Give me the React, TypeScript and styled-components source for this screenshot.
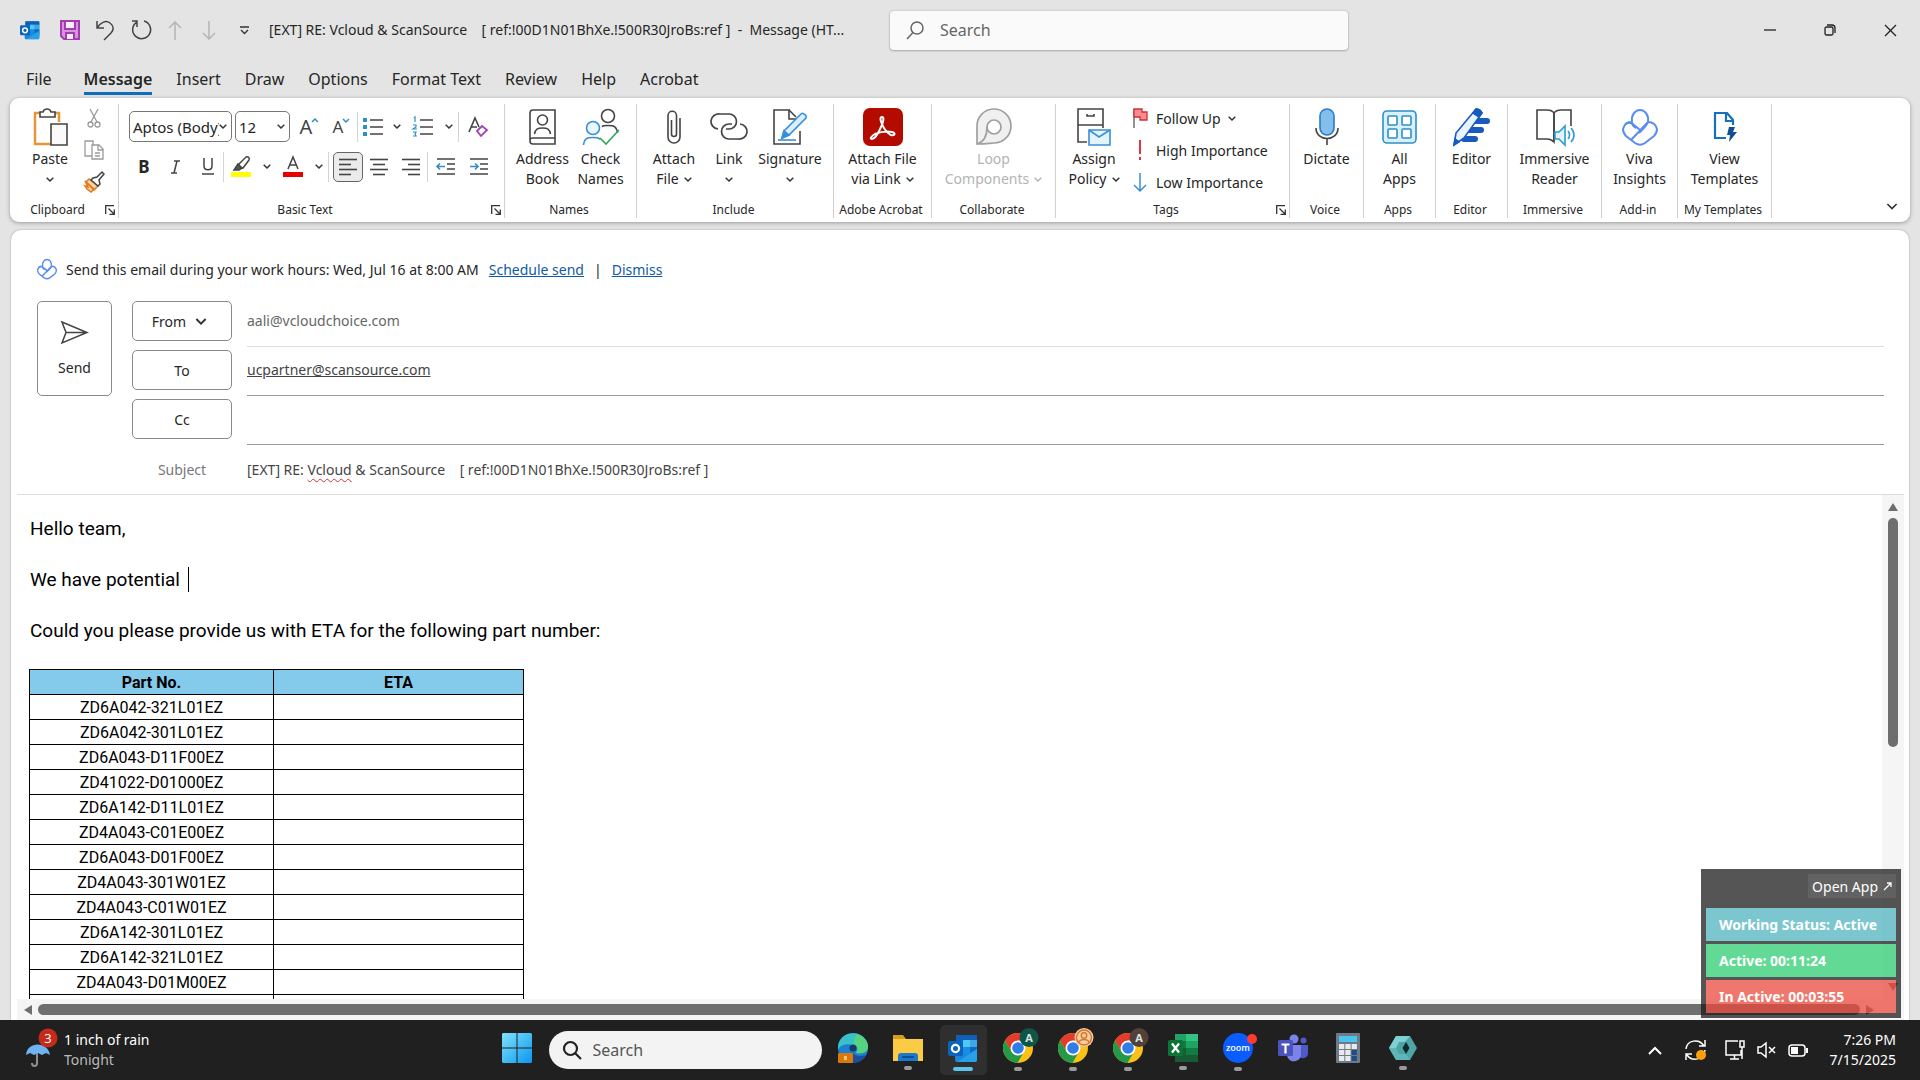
import React from "react";
import styled, { createGlobalStyle, css } from "styled-components";

const ui = `"Noto Sans", "Open Sans", sans-serif`;
const aptos = `Roboto, "Noto Sans", sans-serif`;

const Global = createGlobalStyle`
  * { box-sizing: border-box; }
  body { margin: 0; background: #e4e4e4; color: #262626; font-family: ${ui}; overflow: hidden; }
  button, input, select { font: inherit; color: inherit; background: none; border: 0; padding: 0; margin: 0; }
  svg { display: block; flex: none; overflow: visible; }
`;

const Shell = styled.div`
  display: flex;
  flex-direction: column;
  height: 100vh;
`;

/* ---------- Icon base ---------- */
type IconProps = { w: number; h: number; box?: string; children: React.ReactNode; color?: string; sw?: number };
const Icon = ({ w, h, box, children, color = "#444", sw = 1.5 }: IconProps) => (
  <svg width={w} height={h} viewBox={box ?? `0 0 ${w} ${h}`} fill="none" stroke={color} strokeWidth={sw} aria-hidden="true">
    {children}
  </svg>
);
const Chevron = ({ size = 8, color = "#333", sw = 1.5 }: { size?: number; color?: string; sw?: number }) => (
  <Icon w={size} h={size / 2 + 1} box="0 0 8 5" color={color} sw={sw}>
    <path d="M.7.7 4 4 7.3.7" />
  </Icon>
);

/* ---------- Title bar ---------- */
const TitleBar = styled.header`
  display: grid;
  grid-template-columns: minmax(0, 860px) 458px 1fr;
  column-gap: 30px;
  align-items: center;
  height: 60px;
`;
const QuickAccess = styled.div`
  display: flex;
  align-items: center;
  padding-left: 18px;
`;
const QuickButton = styled.button<{ $w: number }>`
  display: flex;
  justify-content: center;
  align-items: center;
  width: ${(p) => p.$w}px;
  height: 32px;
`;
const WindowTitle = styled.div`
  margin-left: 17px;
  font-size: 14px;
  line-height: 20px;
  white-space: pre;
`;
const TitleSearch = styled.label`
  display: flex;
  align-items: center;
  gap: 16px;
  height: 39px;
  padding-left: 16px;
  border-radius: 4px;
  background: #fafafa;
  box-shadow: 0 0 2px #aaa, 0 1px 2px #aaa;
  input { flex: 1; min-width: 0; font-size: 16px; outline: 0; }
  input::placeholder { color: #666; opacity: 1; }
`;
const WindowButtons = styled.div`
  display: flex;
  justify-content: flex-end;
`;

/* ---------- Tabs ---------- */
const Tabs = styled.nav`
  display: flex;
  gap: 24px;
  height: 38px;
  padding: 7px 26px 0;
`;
const Tab = styled.button<{ $active?: boolean; $after?: number }>`
  height: 28px;
  margin-right: ${(p) => p.$after ?? 0}px;
  font-size: 16px;
  line-height: 25px;
  font-weight: ${(p) => (p.$active ? 600 : 400)};
  border-bottom: 3px solid ${(p) => (p.$active ? "#0f6cbd" : "transparent")};
`;

/* ---------- Ribbon ---------- */
const Ribbon = styled.section`
  display: flex;
  align-items: flex-start;
  height: 124px;
  margin: 0 10px;
  padding-top: 6px;
  border-radius: 9px;
  background: #fff;
  box-shadow: 0 1px 4px #999;
`;
const Group = styled.div<{ $w: number }>`
  display: flex;
  flex-direction: column;
  width: ${(p) => p.$w}px;
  height: 114px;
  border-right: 1px solid #d0d0d0;
`;
const GroupBody = styled.div`
  display: flex;
  justify-content: center;
  flex: 1;
`;
const TagsBody = styled.div`
  display: flex;
  flex: 1;
  gap: 2px;
  padding-left: 3px;
`;
const GroupFoot = styled.div`
  display: flex;
  align-items: center;
  height: 16px;
  padding-right: 3px;
  span { flex: 1; font-size: 12px; line-height: 16px; text-align: center; white-space: nowrap; }
`;
const Big = styled.button<{ $w: number }>`
  display: flex;
  flex-direction: column;
  align-items: center;
  justify-content: flex-start;
  width: ${(p) => p.$w}px;
  font-size: 14px;
  line-height: 20px;
  white-space: nowrap;
  &:disabled { color: #b4b4b4; }
`;
const BigIcon = styled.span`
  display: flex;
  align-items: center;
  justify-content: center;
  height: 45px;
`;
const Line = styled.span`
  display: flex;
  align-items: center;
  justify-content: center;
  gap: 5px;
  height: 20px;
`;
const Stack = styled.div`
  display: flex;
  flex-direction: column;
  gap: 4px;
`;
const Small = styled.button`
  display: flex;
  align-items: center;
  justify-content: center;
  width: 28px;
  height: 28px;
`;
const TagButton = styled.button`
  display: flex;
  align-items: center;
  gap: 7px;
  height: 28px;
  font-size: 14px;
  white-space: nowrap;
  > span { display: flex; justify-content: center; width: 18px; }
`;
const Tools = styled.div`
  display: flex;
  flex-direction: column;
  gap: 9px;
  flex: 1;
  padding: 7px 0 0 10px;
`;
const ToolRow = styled.div`
  display: flex;
  align-items: center;
  height: 31px;
`;
const Tool = styled.button<{ $w: number; $on?: boolean }>`
  display: flex;
  align-items: center;
  justify-content: center;
  width: ${(p) => p.$w}px;
  height: 30px;
  font-size: 17px;
  ${(p) =>
    p.$on &&
    css`
      border: 1px solid #666;
      border-radius: 5px;
      background: #ebebeb;
      margin-left: 4px;
    `}
`;
const Rule = styled.i`
  width: 1px;
  height: 30px;
  background: #d4d4d4;
`;
const Picker = styled.label<{ $w: number }>`
  display: flex;
  align-items: center;
  width: ${(p) => p.$w}px;
  height: 31px;
  margin-right: 3px;
  padding: 0 4px 0 3px;
  border: 1px solid #777;
  border-radius: 5px;
  select { flex: 1; min-width: 0; appearance: none; font-size: 15px; outline: 0; overflow: hidden; }
`;
const Glyph = styled.span<{ $size: number }>`
  font-size: ${(p) => p.$size}px;
  line-height: 24px;
  color: #444;
`;
const Collapse = styled.button`
  align-self: flex-end;
  margin: 0 12px 12px auto;
`;

/* ---------- Message pane ---------- */
const Pane = styled.main`
  display: flex;
  flex-direction: column;
  flex: 1;
  min-height: 0;
  margin: 8px 11px 0;
  padding: 27px 5px 0 6px;
  border-radius: 10px 10px 0 0;
  background: #fff;
  box-shadow: 0 0 2px #999;
`;
const Notice = styled.div`
  display: flex;
  align-items: center;
  gap: 10px;
  height: 24px;
  padding-left: 20px;
  font-size: 14px;
  svg { margin-right: -1px; }
  a { color: #0f5ba8; text-decoration: underline; }
`;
const Headers = styled.div`
  display: grid;
  grid-template-columns: 80px 100px 1fr;
  grid-auto-rows: 49px;
  column-gap: 15px;
  align-items: start;
  margin-top: 17px;
  padding: 0 20px;
  border-bottom: 1px solid #dcdcdc;
  font-size: 14px;
`;
const SendButton = styled.button`
  grid-row: 1 / 4;
  display: flex;
  flex-direction: column;
  align-items: center;
  justify-content: center;
  gap: 14px;
  width: 75px;
  height: 95px;
  margin-top: 3px;
  border: 1px solid #8a8a8a;
  border-radius: 5px;
`;
const FieldButton = styled.button`
  display: flex;
  align-items: center;
  justify-content: center;
  gap: 9px;
  height: 40px;
  margin-top: 3px;
  border: 1px solid #8a8a8a;
  border-radius: 5px;
  svg { margin-right: 5px; }
`;
const Field = styled.input<{ $light?: boolean; $link?: boolean }>`
  align-self: stretch;
  width: 100%;
  padding-bottom: 3px;
  color: ${(p) => (p.$light ? "#666" : "#444")};
  border-bottom: 1px solid ${(p) => (p.$light ? "#ddd" : "#999")};
  text-decoration: ${(p) => (p.$link ? "underline" : "none")};
  outline: 0;
`;
const SubjectLabel = styled.span`
  grid-column: 2;
  line-height: 49px;
  text-align: center;
  color: #777;
`;
const Subject = styled.div`
  line-height: 49px;
  white-space: pre;
  color: #444;
  u { text-decoration: underline wavy #d13438 1px; text-underline-offset: 3px; text-decoration-skip-ink: none; }
`;

/* ---------- Body ---------- */
const Editor = styled.div`
  display: grid;
  grid-template-columns: minmax(0, 1fr) 22px;
  grid-template-rows: minmax(0, 1fr) 21px;
  flex: 1;
  min-height: 0;
`;
const Letter = styled.article`
  overflow: hidden;
  padding: 21px 12px 0;
  font-family: ${aptos};
  color: #000;
  p { margin: 0 0 25px 1px; font-size: 19px; line-height: 26px; }
`;
const Caret = styled.i`
  display: inline-block;
  width: 1px;
  height: 25px;
  margin-left: 3px;
  vertical-align: -6px;
  background: #000;
`;
const Parts = styled.table`
  border-collapse: collapse;
  table-layout: fixed;
  width: 495px;
  font-size: 16px;
  line-height: 23px;
  text-align: center;
  th, td { height: 25px; padding: 1px 0 0; border: 1px solid #000; }
  th { background: #83caeb; }
  th:first-child { width: 244px; }
`;
const VTrack = styled.div`
  display: flex;
  flex-direction: column;
  align-items: center;
  gap: 7px;
  padding: 8px 0;
  background: #f5f5f5;
  svg:last-child { margin-top: auto; }
`;
const HTrack = styled.div`
  display: flex;
  align-items: center;
  gap: 6px;
  grid-column: 1 / 3;
  padding: 0 30px 0 7px;
  background: #f5f5f5;
`;
const VThumb = styled.i`
  width: 10px;
  height: 47%;
  border-radius: 5px;
  background: #6e6e6e;
`;
const HThumb = styled.i`
  flex: 1;
  height: 11px;
  border-radius: 6px;
  background: #6e6e6e;
`;

/* ---------- Floating status widget ---------- */
const Widget = styled.aside`
  position: fixed;
  right: 19px;
  bottom: 62px;
  display: flex;
  flex-direction: column;
  gap: 3px;
  width: 200px;
  padding: 5px;
  background: #1c1c1c;
  opacity: 0.75;
  color: #fff;
`;
const OpenApp = styled.button`
  align-self: flex-end;
  display: flex;
  align-items: center;
  gap: 6px;
  height: 24px;
  margin-bottom: 7px;
  padding: 0 4px;
  background: #2e2e2e;
  font-size: 14px;
`;
const Bar = styled.div<{ $bg: string }>`
  height: 33px;
  padding-left: 13px;
  background: ${(p) => p.$bg};
  font-size: 14px;
  font-weight: 700;
  line-height: 34px;
`;

/* ---------- Taskbar ---------- */
const Taskbar = styled.footer`
  display: grid;
  grid-template-columns: 1fr auto 1fr;
  height: 60px;
  background: #202020;
  color: #fff;
  font-size: 14px;
  line-height: 20px;
`;
const Weather = styled.button`
  display: flex;
  align-items: center;
  justify-self: start;
  gap: 6px;
  padding-left: 24px;
  text-align: left;
  small { display: block; font-size: 14px; color: #bbb; }
`;
const Apps = styled.div`
  display: flex;
  align-items: center;
`;
const TaskButton = styled.button<{ $active?: boolean; $dot?: boolean }>`
  display: flex;
  flex-direction: column;
  align-items: center;
  justify-content: center;
  width: 47px;
  height: 50px;
  margin: 0 4px;
  padding-top: 4px;
  border-radius: 5px;
  background: ${(p) => (p.$active ? "#2f2f2f" : "transparent")};
  &::after {
    content: "";
    width: ${(p) => (p.$active ? 20 : 8)}px;
    height: 4px;
    margin-top: 4px;
    border-radius: 2px;
    background: ${(p) => (p.$active ? "#5cc3ee" : p.$dot ? "#9a9a9a" : "transparent")};
  }
`;
const TaskSearch = styled.label`
  display: flex;
  align-items: center;
  gap: 12px;
  width: 273px;
  height: 38px;
  margin: 0 4px;
  padding-left: 14px;
  border-radius: 19px;
  background: #f3f3f3;
  input { flex: 1; min-width: 0; font-size: 16px; outline: 0; }
  input::placeholder { color: #555; opacity: 1; }
`;
const Tray = styled.div`
  display: flex;
  align-items: center;
  justify-content: flex-end;
  gap: 12px;
  padding-right: 24px;
`;
const TrayButton = styled.button<{ $gap?: number }>`
  margin-right: ${(p) => p.$gap ?? 0}px;
`;
const Clock = styled.time`
  margin-left: 10px;
  text-align: right;
`;

/* ---------- Drawings ---------- */
const OutlookIcon = ({ size }: { size: number }) => (
  <svg width={size} height={size} viewBox="0 0 30 30" aria-hidden="true">
    <rect x="8" y="2" width="21" height="24" rx="2" fill="#1490df" />
    <rect x="8" y="2" width="21" height="6" fill="#0f5fb8" />
    <rect x="15" y="7" width="7" height="7" fill="#50c8f4" />
    <rect x="22" y="7" width="7" height="7" fill="#3ba8ea" />
    <rect x="22" y="14" width="7" height="7" fill="#1267c4" />
    <path d="M7 17l11 5 11-6v11a2 2 0 0 1-2 2H9a2 2 0 0 1-2-2z" fill="#1a86db" />
    <path d="M29 16v11a2 2 0 0 1-2 2H9z" fill="#2fb2f0" opacity=".6" />
    <rect x="0" y="8" width="15" height="15" rx="2" fill="#0a64bd" />
    <circle cx="7.500" cy="15.500" r="3.600" fill="none" stroke="#fff" strokeWidth="2.200" />
  </svg>
);
const Person = ({ x, y, r, color, fill = "none" }: { x: number; y: number; r: number; color: string; fill?: string }) => (
  <g stroke={color} fill={fill}>
    <circle cx={x} cy={y} r={r} />
    <path d={`M${x - r - 3} ${y + r * 2 + 4}c1-${r} 3-${r + 1} ${r + 3}-${r + 1}s${r + 2} 1 ${r + 3} ${r + 1}`} fill="none" />
  </g>
);
const VivaIcon = ({ w, h, sw = 2 }: { w: number; h: number; sw?: number }) => (
  <Icon w={w} h={h} box="0 0 36 36" color="#5b8def" sw={sw}>
    <path d="M10 13c-1-7 3-12 8-12s9 5 8 12c-1 3-3 5-5 7l-4 4" />
    <path d="M10 13c-5 0-8 3-9 7 0 3 1 5 3 7l9 7c3 2 7 2 10 0l9-7c2-2 3-4 3-7-1-4-4-7-9-7" />
    <path d="M3 15c3-2 6-2 9 1l6 5M26 13 9 31" />
    <path d="M10 13c0 3 2 5 4 6" />
  </Icon>
);
const Chrome = ({ badge, letter }: { badge: string; letter?: string }) => (
  <svg width="30" height="30" viewBox="0 0 30 30" aria-hidden="true">
    <circle cx="15" cy="15" r="15" fill="#fbc116" />
    <path d="M2 7.500A15 15 0 0 1 28 7.500H15L8.500 18.700z" fill="#e33b2e" />
    <path d="M2 7.500 8.500 18.700a7.500 7.500 0 0 0 12.500 0L14.500 30A15 15 0 0 1 2 7.500z" fill="#229a48" />
    <circle cx="15" cy="15" r="7.500" fill="#fff" />
    <circle cx="15" cy="15" r="5.800" fill="#2f7de9" />
    <circle cx="26" cy="4.500" r="9.500" fill={badge} />
    {letter ? (
      <text x="26" y="8.500" fill="#d8e6e0" fontSize="11" fontWeight="700" textAnchor="middle" fontFamily="Open Sans">{letter}</text>
    ) : (
      <g fill="none" stroke="#d9782d" strokeWidth="1.500">
        <circle cx="26" cy="4.500" r="7.500" />
        <circle cx="26" cy="2.500" r="2.700" />
        <path d="M21 9.500c1-4 9-4 10 0" />
      </g>
    )}
  </svg>
);
const Launcher = () => (
  <Icon w={10} h={10} sw={1.3} color="#333">
    <path d="M.7 9V.7H9M3.500 3.500 9 9M9.300 4.500v4.800H4.500" />
  </Icon>
);
const Lines = ({ rows }: { rows: [number, number][] }) => (
  <Icon w={18} h={18} sw={1.6}>
    {rows.map(([a, b], i) => (
      <path key={i} d={`M${a} ${1.5 + i * 5}H${b}`} />
    ))}
  </Icon>
);

const CaretLine = ({ text, color }: { text?: string; color?: string }) => (
  <Line>
    {text}
    <Chevron color={color} />
  </Line>
);

const icons = {
  address: (
    <Icon w={27} h={36} sw={1.6}>
      <path d="M4 1h22v34H4a3 3 0 0 1-3-3V4a3 3 0 0 1 3-3zM1 32c0-3 1-3 3-3h22" />
      <Person x={13.5} y={11} r={5} color="#444" />
    </Icon>
  ),
  check: (
    <Icon w={36} h={37} sw={1.6}>
      <Person x={25} y={8} r={6.5} color="#444" />
      <circle cx="10" cy="20" r="9" fill="#fff" stroke="none" />
      <Person x={10} y={20} r={6.5} color="#3a8fd6" fill="#eaf6ff" />
      <path d="M17 29h12l3 8H17z" fill="#fff" stroke="none" />
      <path d="M17 30l6 6L36 22" stroke="#37a357" />
    </Icon>
  ),
  attach: (
    <Icon w={14} h={36} sw={1.6}>
      <path d="M4.500 11v14a2.500 2.500 0 0 0 5 0V6.500a4 4 0 0 0-8.500 0V28a6 6 0 0 0 12 0V9" />
    </Icon>
  ),
  link: (
    <Icon w={36} h={28} sw={1.7}>
      <path d="M7 16a8 7.500 0 0 1 2-15h9a7.500 7.500 0 0 1 0 15h-3" />
      <path d="M29 11a8 7.500 0 0 1-2 15h-9a7.500 7.500 0 0 1 0-15h3" />
    </Icon>
  ),
  signature: (
    <Icon w={36} h={36} sw={1.6}>
      <path d="M18 1H2v34h26V22M17 1v9h7" />
      <path d="M17 1l7 7" />
      <path d="M32 5a3 3 0 0 1 2 4L17 26l-7 3 2-7L29 5c1-1 2-1 3 0z" fill="#d9efff" stroke="#3a8fd6" />
      <path d="M10 29l2-7 5 4z" fill="#3a8fd6" stroke="#3a8fd6" />
      <path d="M6 31h18" stroke="#3a8fd6" />
    </Icon>
  ),
  adobe: (
    <Icon w={40} h={38} sw={2} color="#fff">
      <rect width="40" height="38" rx="7" fill="#b30b00" stroke="none" />
      <path d="M19 9c-2 0-2 3 0 7 2 5 5 9 9 11 4 1 5-2 1-3-5-1-12 0-17 2-5 3-5 5-3 5 3 0 6-5 9-12 3-6 3-10 1-10z" />
    </Icon>
  ),
  loop: (
    <Icon w={36} h={36} color="#a0a0a0" sw={1.7}>
      <path d="M1 35V18A17 17 0 1 1 18 34c-3 0-8 1-17 1z" fill="#f0f0f0" />
      <circle cx="18" cy="18" r="7" fill="#fff" />
      <path d="M11 18c0 8-3 15-10 17" />
    </Icon>
  ),
  assign: (
    <Icon w={34} h={38} sw={1.6}>
      <path d="M10 34H1V1h25v19M1 17h25M10 6v2h7V6" />
      <path d="M12 22h21v15H12z" fill="#e3f4ff" stroke="#3a8fd6" />
      <path d="M12 22l10 7 11-7" stroke="#3a8fd6" />
    </Icon>
  ),
  mic: (
    <Icon w={24} h={37} sw={1.6}>
      <rect x="5" y="1" width="14" height="26" rx="7" fill="#83beec" stroke="#2b7cc4" />
      <path d="M1 20c0 14 22 14 22 0M12 31v6" />
    </Icon>
  ),
  apps: (
    <Icon w={35} h={34} color="#2f8fc6" sw={1.6}>
      <rect x="1" y="1" width="33" height="32" rx="4" fill="#d8f1fd" />
      {[[6, 6], [20, 6], [6, 19], [20, 19]].map(([x, y]) => (
        <rect key={`${x}-${y}`} x={x} y={y} width="9" height="9" rx="1" fill="#fff" />
      ))}
    </Icon>
  ),
  editor: (
    <Icon w={38} h={38} color="#185abd" sw={1.6}>
      <path d="M20 13h14M16 22h12M11 31h11" strokeWidth="6" strokeLinecap="round" />
      <path d="M23 1c3 0 5 2 6 4L11 30 1 37l2-12z" fill="#e9f2ff" />
      <path d="M23 1c3 0 5 2 6 4l-3 4-6-4zM1 37l1-6 4 3z" fill="#185abd" />
    </Icon>
  ),
  reader: (
    <Icon w={38} h={36} sw={1.6}>
      <path d="M18 4C16 1 13 1 11 1H1v29h10c3 0 5 1 7 3V4c2-3 5-3 7-3h10v16" />
      <path d="M18 4v28" />
      <path d="M19 23h4l6-6v19l-6-6h-4z" fill="#e3f4ff" stroke="#2f9bd0" />
      <path d="M32 22c2 2 2 6 0 8M35 19c4 4 4 10 0 14" stroke="#2f9bd0" />
    </Icon>
  ),
  view: (
    <Icon w={24} h={32} color="#1671b8" sw={2.2}>
      <path d="M13 27H2V2h12l6 7v5M13 2v8h7" />
      <path d="M16 16h6l-2 5h4l-8 10 1-7h-3z" fill="#0f4f92" stroke="none" />
    </Icon>
  ),
};

type BigSpec = { w: number; icon: keyof typeof icons | "viva"; a: string; b?: string; caret?: boolean; off?: boolean };
const BigButton = ({ w, icon, a, b, caret, off }: BigSpec) => (
  <Big $w={w} disabled={off}>
    <BigIcon>{icon === "viva" ? <VivaIcon w={36} h={36} /> : icons[icon]}</BigIcon>
    <Line>{a}</Line>
    {caret ? <CaretLine text={b} color={off ? "#b4b4b4" : undefined} /> : b && <Line>{b}</Line>}
  </Big>
);

const groupsLeft: { w: number; name: string; items: BigSpec[] }[] = [
  { w: 132, name: "Names", items: [{ w: 60, icon: "address", a: "Address", b: "Book" }, { w: 56, icon: "check", a: "Check", b: "Names" }] },
  {
    w: 197,
    name: "Include",
    items: [
      { w: 60, icon: "attach", a: "Attach", b: "File", caret: true },
      { w: 50, icon: "link", a: "Link", caret: true },
      { w: 72, icon: "signature", a: "Signature", caret: true },
    ],
  },
  { w: 98, name: "Adobe Acrobat", items: [{ w: 90, icon: "adobe", a: "Attach File", b: "via Link", caret: true }] },
  { w: 124, name: "Collaborate", items: [{ w: 110, icon: "loop", a: "Loop", b: "Components", caret: true, off: true }] },
];
const groupsRight: typeof groupsLeft = [
  { w: 74, name: "Voice", items: [{ w: 66, icon: "mic", a: "Dictate" }] },
  { w: 72, name: "Apps", items: [{ w: 66, icon: "apps", a: "All", b: "Apps" }] },
  { w: 72, name: "Editor", items: [{ w: 66, icon: "editor", a: "Editor" }] },
  { w: 94, name: "Immersive", items: [{ w: 84, icon: "reader", a: "Immersive", b: "Reader" }] },
  { w: 76, name: "Add-in", items: [{ w: 66, icon: "viva", a: "Viva", b: "Insights" }] },
  { w: 94, name: "My Templates", items: [{ w: 84, icon: "view", a: "View", b: "Templates" }] },
];
const BigGroups = ({ list }: { list: typeof groupsLeft }) => (
  <>
    {list.map((g) => (
      <Group key={g.name} $w={g.w}>
        <GroupBody>
          {g.items.map((i) => (
            <BigButton key={i.a} {...i} />
          ))}
        </GroupBody>
        <GroupFoot>
          <span>{g.name}</span>
        </GroupFoot>
      </Group>
    ))}
  </>
);
const Foot = ({ name }: { name: string }) => (
  <GroupFoot>
    <span>{name}</span>
    <button aria-label={`${name} options`}>
      <Launcher />
    </button>
  </GroupFoot>
);
const Drop = ({ label }: { label: string }) => (
  <Tool $w={18} aria-label={label}>
    <Chevron />
  </Tool>
);

const parts = [
  "ZD6A042-321L01EZ", "ZD6A042-301L01EZ", "ZD6A043-D11F00EZ", "ZD41022-D01000EZ", "ZD6A142-D11L01EZ",
  "ZD4A043-C01E00EZ", "ZD6A043-D01F00EZ", "ZD4A043-301W01EZ", "ZD4A043-C01W01EZ", "ZD6A142-301L01EZ",
  "ZD6A142-321L01EZ", "ZD4A043-D01M00EZ", "",
];

export default function App() {
  return (
    <Shell>
      <Global />
      <TitleBar>
        <QuickAccess>
          <QuickButton $w={24} aria-label="Outlook"><OutlookIcon size={20} /></QuickButton>
          <QuickButton $w={56} aria-label="Save">
            <Icon w={20} h={20} color="#a23db0" sw={2}>
              <path d="M1 1h18v18H4l-3-3z" fill="#d991e0" />
              <path d="M5 1h10v8H5zM6 19v-6h8v6" fill="#f7ecf8" />
            </Icon>
          </QuickButton>
          <QuickButton $w={14} aria-label="Undo">
            <Icon w={18} h={20}><path d="M1 1v7h7M1 8C5 2 10 0 14 3s4 7 1 10l-7 7" /></Icon>
          </QuickButton>
          <QuickButton $w={56} aria-label="Redo">
            <Icon w={21} h={20}><path d="M2 1h5v6M14 1a9 9 0 1 1-7 1" /></Icon>
          </QuickButton>
          <QuickButton $w={14} aria-label="Previous item">
            <Icon w={14} h={19} color="#b4b4b4"><path d="M7 19V1M1 7l6-6 6 6" /></Icon>
          </QuickButton>
          <QuickButton $w={54} aria-label="Next item">
            <Icon w={14} h={19} color="#b4b4b4"><path d="M7 0v18M1 12l6 6 6-6" /></Icon>
          </QuickButton>
          <QuickButton $w={16} aria-label="Customize toolbar">
            <Icon w={9} h={9} sw={1.3} color="#333"><path d="M0 1h9M1 4l3.500 3.500L8 4" /></Icon>
          </QuickButton>
          <WindowTitle>{"[EXT] RE: Vcloud & ScanSource    [ ref:!00D1N01BhXe.!500R30JroBs:ref ]  -  Message (HT..."}</WindowTitle>
        </QuickAccess>
        <TitleSearch>
          <Icon w={18} h={18} color="#666"><circle cx="11" cy="7" r="6" /><path d="M7 11.500 1 18" /></Icon>
          <input placeholder="Search" aria-label="Search" />
        </TitleSearch>
        <WindowButtons>
          <QuickButton $w={60} aria-label="Minimize"><Icon w={12} h={12} color="#222" sw={1.3}><path d="M0 6h12" /></Icon></QuickButton>
          <QuickButton $w={60} aria-label="Restore">
            <Icon w={12} h={12} color="#222" sw={1.3}><rect x="1" y="3" width="8" height="8" rx="1.500" /><path d="M3 1h5a3 3 0 0 1 3 3v5" /></Icon>
          </QuickButton>
          <QuickButton $w={60} aria-label="Close"><Icon w={13} h={13} color="#222" sw={1.3}><path d="M1 1l11 11M12 1 1 12" /></Icon></QuickButton>
        </WindowButtons>
      </TitleBar>

      <Tabs>
        <Tab $after={8}>File</Tab>
        <Tab $active>Message</Tab>
        {["Insert", "Draw", "Options", "Format Text", "Review", "Help", "Acrobat"].map((t) => (
          <Tab key={t}>{t}</Tab>
        ))}
      </Tabs>

      <Ribbon>
        <Group $w={109}>
          <GroupBody>
            <Big $w={60}>
              <BigIcon>
                <Icon w={35} h={38} sw={1.6}>
                  <path d="M8 5H2v31h16M20 5h6v9" stroke="#e8943a" strokeWidth="2.500" />
                  <path d="M7 9V4h3c1-4 7-4 8 0h4v5z" fill="#fff" />
                  <path d="M18 16h16v21H18z" fill="#fafafa" />
                </Icon>
              </BigIcon>
              <Line>Paste</Line>
              <CaretLine />
            </Big>
            <Stack>
              <Small aria-label="Cut">
                <Icon w={14} h={20} color="#9a9a9a" sw={1.3}><path d="M3 1l7 13M11 1 4 14" /><circle cx="3.500" cy="16.500" r="2.500" /><circle cx="10.500" cy="16.500" r="2.500" /></Icon>
              </Small>
              <Small aria-label="Copy">
                <Icon w={20} h={20} color="#9a9a9a" sw={1.3}><path d="M8 16H1V1h8v4M8 5h7l4 4v10H8zM14 5v5h5M11 13h5M11 16h5" /></Icon>
              </Small>
              <Small aria-label="Format painter">
                <Icon w={20} h={20}><path d="M1 9l9 8-3 3-4-3-2-3 3 1zM5 7l9 7-4 4-8-8z" fill="#fbd3a4" stroke="#e07a1c" /><path d="M9 6l4-1 5-5 2 2-5 6 1 4-2 2-7-6z" fill="#fff" /></Icon>
              </Small>
            </Stack>
          </GroupBody>
          <Foot name="Clipboard" />
        </Group>

        <Group $w={386}>
          <Tools>
            <ToolRow>
              <Picker $w={103}>
                <select aria-label="Font"><option>Aptos (Body)</option></select>
                <Chevron />
              </Picker>
              <Picker $w={55}>
                <select aria-label="Font size"><option>12</option></select>
                <Chevron />
              </Picker>
              <Tool $w={32} aria-label="Grow font">
                <Glyph $size={20}>A</Glyph>
                <Icon w={6} h={18} color="#2f8fc6"><path d="M0 4l3-3 3 3" /></Icon>
              </Tool>
              <Tool $w={32} aria-label="Shrink font">
                <Glyph $size={17}>A</Glyph>
                <Icon w={6} h={18} color="#2f8fc6"><path d="M0 1l3 3 3-3" /></Icon>
              </Tool>
              <Rule />
              <Tool $w={30} aria-label="Bullets">
                <Icon w={20} h={20} sw={1.6}>
                  <path d="M7 3h13M7 10h13M7 17h13" />
                  <path d="M0 3h4M0 10h4M0 17h4" stroke="#2f8fc6" strokeWidth="4" />
                </Icon>
              </Tool>
              <Drop label="Bullet styles" />
              <Tool $w={34} aria-label="Numbering">
                <Icon w={20} h={20} sw={1.6}>
                  <path d="M7 3h13M7 10h13M7 17h13" />
                  <path d="M1 1l1-1v5M0 8h3v2L0 12h4M0 15h3l-1 2 1 2H0" stroke="#2f8fc6" strokeWidth="1.200" />
                </Icon>
              </Tool>
              <Drop label="Number styles" />
              <Rule />
              <Tool $w={38} aria-label="Clear formatting">
                <Icon w={20} h={20} sw={1.6}>
                  <path d="M1 15 7 1l4 9M3 10h6" />
                  <path d="M9 14l5-5 5 4-6 6z" fill="#fff" stroke="#9b45b2" strokeWidth="1.800" />
                </Icon>
              </Tool>
            </ToolRow>
            <ToolRow>
              <Tool $w={30}><b>B</b></Tool>
              <Tool $w={34} aria-label="Italic"><Icon w={10} h={14}><path d="M3 1h6M0 13h6M6 1 3 13" /></Icon></Tool>
              <Tool $w={30} aria-label="Underline"><Icon w={12} h={17}><path d="M2 0v8c0 5 8 5 8 0V0M0 16h12" /></Icon></Tool>
              <Rule />
              <Tool $w={34} aria-label="Highlight">
                <Icon w={20} h={21}>
                  <path d="M0 16h20v5H0z" fill="#ff0" stroke="none" />
                  <path d="M8 8l7-7c2-1 4 1 3 3l-6 8-4 1-1-1z" />
                  <path d="M7 8l4 4-3 2H3z" fill="#555" />
                </Icon>
              </Tool>
              <Drop label="Highlight colors" />
              <Tool $w={34} aria-label="Font color">
                <Icon w={20} h={21}>
                  <path d="M0 16h20v5H0z" fill="#e60000" stroke="none" />
                  <path d="M5 13 10 1l5 12M7 9h6" />
                </Icon>
              </Tool>
              <Drop label="Font colors" />
              <Rule />
              <Tool $w={30} $on aria-label="Align left"><Lines rows={[[0, 18], [0, 12], [0, 18], [0, 12]]} /></Tool>
              <Tool $w={32} aria-label="Center"><Lines rows={[[0, 18], [3, 15], [0, 18], [3, 15]]} /></Tool>
              <Tool $w={32} aria-label="Align right"><Lines rows={[[0, 18], [6, 18], [0, 18], [6, 18]]} /></Tool>
              <Rule />
              <Tool $w={36} aria-label="Decrease indent">
                <Icon w={18} h={17} sw={1.6}><path d="M0 1h18M10 6h8M10 11h8M0 16h18" /><path d="M8 8.500H0M3 5.500l-3 3 3 3" stroke="#2f8fc6" /></Icon>
              </Tool>
              <Tool $w={30} aria-label="Increase indent">
                <Icon w={18} h={17} sw={1.6}><path d="M0 1h18M10 6h8M10 11h8M0 16h18" /><path d="M0 8.500h8M5 5.500l3 3-3 3" stroke="#2f8fc6" /></Icon>
              </Tool>
            </ToolRow>
          </Tools>
          <Foot name="Basic Text" />
        </Group>

        <BigGroups list={groupsLeft} />

        <Group $w={234}>
          <TagsBody>
            <BigButton w={70} icon="assign" a="Assign" b="Policy" caret />
            <Stack>
              <TagButton>
                <span><Icon w={14} h={20} color="#c9333d" sw={1.3}><path d="M1 1v19" stroke="#555" /><path d="M1 1h8v3h5v8H7V9H1z" fill="#fb8a8f" /></Icon></span>
                Follow Up <Chevron />
              </TagButton>
              <TagButton>
                <span><Icon w={4} h={20} color="#e0343f" sw={2}><path d="M2 0v14M2 17v3" /></Icon></span>
                High Importance
              </TagButton>
              <TagButton>
                <span><Icon w={14} h={19} color="#3a8fd6"><path d="M7 0v18M1 12l6 6 6-6" /></Icon></span>
                Low Importance
              </TagButton>
            </Stack>
          </TagsBody>
          <Foot name="Tags" />
        </Group>

        <BigGroups list={groupsRight} />
        <Collapse aria-label="Collapse ribbon"><Chevron size={12} sw={1.2} /></Collapse>
      </Ribbon>

      <Pane>
        <Notice>
          <VivaIcon w={20} h={20} sw={2.6} />
          <span>Send this email during your work hours: Wed, Jul 16 at 8:00 AM</span>
          <a href="#schedule">Schedule send</a>
          <span>|</span>
          <a href="#dismiss">Dismiss</a>
        </Notice>
        <Headers>
          <SendButton>
            <Icon w={27} h={23}><path d="M1 1l25 10.500L1 22l4-10.500zM5 11.500h21" /></Icon>
            Send
          </SendButton>
          <FieldButton>From <Chevron size={12} sw={1.4} /></FieldButton>
          <Field $light aria-label="From" defaultValue="aali@vcloudchoice.com" />
          <FieldButton>To</FieldButton>
          <Field $link aria-label="To" defaultValue="ucpartner@scansource.com" />
          <FieldButton>Cc</FieldButton>
          <Field aria-label="Cc" />
          <SubjectLabel id="subject">Subject</SubjectLabel>
          <Subject role="textbox" aria-labelledby="subject">
            [EXT] RE: <u>Vcloud</u>{" & ScanSource    [ ref:!00D1N01BhXe.!500R30JroBs:ref ]"}
          </Subject>
        </Headers>
        <Editor>
          <Letter>
            <p>Hello team,</p>
            <p>We have potential <Caret /></p>
            <p>Could you please provide us with ETA for the following part number:</p>
            <Parts>
              <thead><tr><th>Part No.</th><th>ETA</th></tr></thead>
              <tbody>
                {parts.map((p, i) => (
                  <tr key={i}><td>{p}</td><td /></tr>
                ))}
              </tbody>
            </Parts>
          </Letter>
          <VTrack>
            <Icon w={10} h={8}><path d="M5 0l5 8H0z" fill="#6e6e6e" stroke="none" /></Icon>
            <VThumb />
            <Icon w={10} h={8}><path d="M5 8l5-8H0z" fill="#6e6e6e" stroke="none" /></Icon>
          </VTrack>
          <HTrack>
            <Icon w={8} h={10}><path d="M0 5l8-5v10z" fill="#6e6e6e" stroke="none" /></Icon>
            <HThumb />
            <Icon w={8} h={10}><path d="M8 5 0 0v10z" fill="#6e6e6e" stroke="none" /></Icon>
          </HTrack>
        </Editor>
      </Pane>

      <Widget>
        <OpenApp>Open App <Icon w={8} h={8} color="#fff" sw={1.3}><path d="M0 8l7-7M3 1h4v4" /></Icon></OpenApp>
        <Bar $bg="#50b3bf">Working Status: Active</Bar>
        <Bar $bg="#2ecc71">Active: 00:11:24</Bar>
        <Bar $bg="#eb4a3c">In Active: 00:03:55</Bar>
      </Widget>

      <Taskbar>
        <Weather>
          <svg width="34" height="42" viewBox="0 0 34 42" aria-hidden="true">
            <path d="M2 26c1-14 22-14 24 0l-4-2-4 2-4-2-4 2-4-2z" fill="#6fb4f2" />
            <path d="M13 24v10c0 4-5 4-5 0" fill="none" stroke="#8f8f8f" strokeWidth="2" />
            <circle cx="24" cy="9" r="9.500" fill="#c42b1c" />
            <text x="24" y="14" fontSize="13" fill="#fff" textAnchor="middle" fontFamily="Open Sans">3</text>
          </svg>
          <span>1 inch of rain<small>Tonight</small></span>
        </Weather>
        <Apps>
          <TaskButton aria-label="Start">
            <svg width="30" height="30" viewBox="0 0 30 30" aria-hidden="true">
              <defs><linearGradient id="win" x1="0" y1="0" x2="1" y2="1" gradientUnits="objectBoundingBox"><stop stopColor="#7fe3fb" /><stop offset="1" stopColor="#0b96f0" /></linearGradient></defs>
              <path d="M1 0h13.500v14.500H0V1zM15.500 0H29l1 1v13.500H15.500zM0 15.500h14.500V30H1l-1-1zM15.500 15.500H30V29l-1 1H15.500z" fill="url(#win)" />
            </svg>
          </TaskButton>
          <TaskSearch>
            <Icon w={18} h={19} color="#222" sw={2.2}><circle cx="7.500" cy="7.500" r="6.500" /><path d="M12 12l6 6" /></Icon>
            <input placeholder="Search" aria-label="Search Windows" />
          </TaskSearch>
          <TaskButton aria-label="Edge">
            <svg width="30" height="30" viewBox="0 0 30 30" aria-hidden="true">
              <circle cx="15" cy="15" r="15" fill="#1c7fd1" />
              <path d="M0 13C2-3 27-5 30 13c0 7-6 8-12 7 3-4 1-8-3-8C8 10 2 12 0 17z" fill="#38c1c9" />
              <path d="M18 1c8 2 12 7 12 12 0 7-6 8-12 7 3-4 1-8-3-8z" fill="#5fd66f" opacity=".8" />
              <circle cx="15" cy="15" r="3.500" fill="#143a66" />
              <path d="M14 19c2 4 8 5 14 3-3 6-8 8-13 8z" fill="#1a4f9c" />
              <rect x="0" y="20" width="15" height="10" rx="1" fill="#d9790b" />
              <rect x="6" y="23" width="3" height="4" fill="#ffc46b" />
            </svg>
          </TaskButton>
          <TaskButton $dot aria-label="File Explorer">
            <svg width="30" height="28" viewBox="0 0 30 28" aria-hidden="true">
              <path d="M0 1h10l3 4v6H0z" fill="#d99b1a" />
              <path d="M0 5h30v22H0z" fill="#fbcb45" />
              <path d="M5 27v-5c0-2 1-3 3-3h14c2 0 3 1 3 3v5z" fill="#1a78cf" />
              <path d="M9 22h12v2H9z" fill="#0d4f96" />
            </svg>
          </TaskButton>
          <TaskButton $active aria-label="Outlook"><OutlookIcon size={30} /></TaskButton>
          <TaskButton $dot aria-label="Chrome, A"><Chrome badge="#0f5648" letter="A" /></TaskButton>
          <TaskButton $dot aria-label="Chrome, guest"><Chrome badge="#f3cfa4" /></TaskButton>
          <TaskButton $dot aria-label="Chrome, second A"><Chrome badge="#54403b" letter="A" /></TaskButton>
          <TaskButton $dot aria-label="Excel">
            <svg width="30" height="28" viewBox="0 0 30 28" aria-hidden="true">
              <path d="M7 0h23v28H7z" fill="#21a366" />
              <path d="M18 0h12v7H18z" fill="#33c481" />
              <path d="M7 14h11v7H7zM7 21h23v7H7z" fill="#185c37" />
              <path d="M18 14h12v7H18zM7 7h11v7H7z" fill="#107c41" />
              <rect y="6" width="15" height="16" rx="1.500" fill="#0f7238" />
              <path d="M4 9.500l7 9M11 9.500l-7 9" stroke="#fff" strokeWidth="2.200" />
            </svg>
          </TaskButton>
          <TaskButton $dot aria-label="Zoom">
            <svg width="30" height="30" viewBox="0 0 30 30" aria-hidden="true">
              <circle cx="15" cy="15" r="15" fill="#0b5cff" />
              <text x="15" y="18" fontSize="9" fontWeight="600" fill="#fff" textAnchor="middle" fontFamily="Open Sans">zoom</text>
              <circle cx="29" cy="6" r="5" fill="#ff3b30" />
            </svg>
          </TaskButton>
          <TaskButton aria-label="Teams">
            <svg width="30" height="28" viewBox="0 0 30 28" aria-hidden="true">
              <circle cx="16" cy="5" r="4.500" fill="#7b83eb" />
              <circle cx="25.500" cy="6.500" r="3" fill="#5059c9" />
              <path d="M20 11h10v8c0 6-8 7-10 2z" fill="#5059c9" />
              <path d="M9 11h14v9c0 9-13 10-14 1z" fill="#7b83eb" />
              <rect y="6" width="15" height="16" rx="1.500" fill="#4b53bc" />
              <path d="M3.500 10.500h8M7.500 10.500v9" stroke="#fff" strokeWidth="2.200" />
            </svg>
          </TaskButton>
          <TaskButton aria-label="Calculator">
            <svg width="24" height="30" viewBox="0 0 24 30" aria-hidden="true">
              <rect width="24" height="30" rx="1" fill="#6e7a86" />
              <rect x="3" y="3" width="18" height="6" fill="#4cc2ee" />
              {[0, 1, 2].map((r) => [0, 1, 2].map((c) => (
                <rect key={`${r}${c}`} x={3 + c * 6.3} y={11 + r * 6} width="5.300" height="5" fill={c === 2 && r > 0 ? "#1c4f87" : "#e8eaec"} />
              )))}
            </svg>
          </TaskButton>
          <TaskButton $dot aria-label="Time tracker">
            <svg width="28" height="28" viewBox="0 0 28 28" aria-hidden="true">
              <path d="M7 2h14l7 12-7 12H7L0 14z" fill="#4fa5a5" />
              <path d="M0 14 7 2h14l-5 6H10l-3 6z" fill="#7fd0d0" />
              <path d="M7 14l3 6h7l4 6H7L0 14z" fill="#5fb6b6" />
              <path d="M17 8l3.500 6-3.500 6-3.500-6z" fill="#102a2e" />
            </svg>
          </TaskButton>
        </Apps>
        <Tray>
          <TrayButton $gap={11} aria-label="Hidden icons"><Icon w={14} h={9} color="#fff" sw={2}><path d="M1 8l6-6 6 6" /></Icon></TrayButton>
          <TrayButton $gap={6} aria-label="Sync">
            <Icon w={22} h={20} color="#fff">
              <path d="M1 9C2 0 14-2 19 6M20 0v6h-6M1 20v-6h6M20 10c-1 10-13 12-18 5" />
              <circle cx="16" cy="15" r="5" fill="#ff9f0a" stroke="none" />
            </Icon>
          </TrayButton>
          <TrayButton aria-label="Network"><Icon w={20} h={20} color="#fff"><path d="M13 1H1v14h15v-5M5 19h9M9.500 15v4M15 1h4v6h-4zM17 7v12" /></Icon></TrayButton>
          <TrayButton aria-label="Muted"><Icon w={19} h={16} color="#fff"><path d="M1 5h3l5-4v14l-5-4H1zM12 5l6 6M18 5l-6 6" /></Icon></TrayButton>
          <TrayButton aria-label="Battery"><Icon w={20} h={13} color="#fff"><rect x="1" y="1" width="16" height="11" rx="3" /><path d="M19 4v5" strokeWidth="2" /><rect x="3" y="3" width="7" height="7" fill="#fff" stroke="none" /></Icon></TrayButton>
          <Clock>7:26 PM<br />7/15/2025</Clock>
        </Tray>
      </Taskbar>
    </Shell>
  );
}
